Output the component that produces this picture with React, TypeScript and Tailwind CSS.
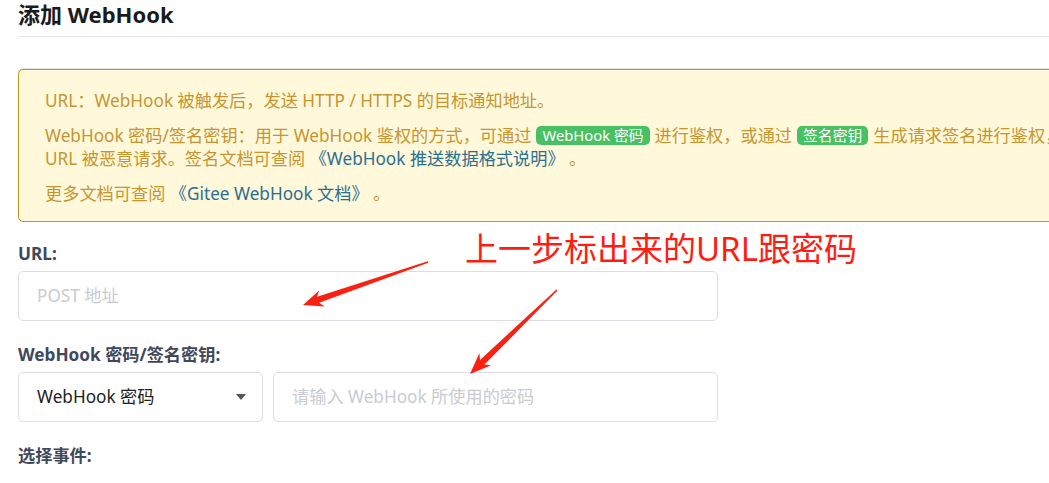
const FONT = { fontFamily: '"Noto Sans", "Noto Sans CJK SC", sans-serif' };

type Pt = [number, number];

// tapered annotation arrow, from a thin tail to a barbed tip
const arrowPoints = (tail: Pt, tip: Pt, headLen: number, shaftW: number, barbW: number) => {
  const dx = tip[0] - tail[0];
  const dy = tip[1] - tail[1];
  const len = Math.hypot(dx, dy);
  const ux = dx / len;
  const uy = dy / len;
  const nx = -uy;
  const ny = ux;
  const base: Pt = [tip[0] - ux * headLen, tip[1] - uy * headLen];
  const barb: Pt = [tip[0] - ux * headLen * 1.25, tip[1] - uy * headLen * 1.25];
  const pts: Pt[] = [
    [tail[0] + nx * 0.8, tail[1] + ny * 0.8],
    [base[0] + nx * shaftW, base[1] + ny * shaftW],
    [barb[0] + nx * barbW, barb[1] + ny * barbW],
    tip,
    [barb[0] - nx * barbW, barb[1] - ny * barbW],
    [base[0] - nx * shaftW, base[1] - ny * shaftW],
    [tail[0] - nx * 0.8, tail[1] - ny * 0.8],
  ];
  return pts.map((p) => p.join(",")).join(" ");
};

const Tag = ({ children }: { children: React.ReactNode }) => (
  <span className="inline-block mx-[5px] px-[6px] rounded-[5px] bg-[#47c163] text-white text-[14.8px] leading-[19px] align-[1px]">
    {children}
  </span>
);

const Label = ({ children }: { children: React.ReactNode }) => (
  <p className="text-[17.2px] leading-[24px] font-bold text-[#40485b] mb-[5px]">{children}</p>
);

const App = () => {
  return (
    <div className="relative h-screen w-screen overflow-hidden bg-white" style={FONT}>
      <section className="pl-[18px] w-[1170px]">
        <h1 className="text-[22px] leading-[28px] font-bold text-[#1b1b1b] pb-[8px] border-b border-[#e6e6e6]">
          添加 WebHook
        </h1>

        <div className="mt-[32px] border border-[#c79224] rounded-[5px] bg-[#fff8db] shadow-[0_-1px_0_#e4e4e4] pl-[26px] pr-4 pt-[19px] pb-[16px] text-[17.2px] leading-[23px] text-[#c6952f]">
          <p className="mb-[12px]">URL：WebHook 被触发后，发送 HTTP / HTTPS 的目标通知地址。</p>
          <p className="mb-[12px]">
            WebHook 密码/签名密钥：用于 WebHook 鉴权的方式，可通过<Tag>WebHook 密码</Tag>进行鉴权，或通过<Tag>签名密钥</Tag>生成请求签名进行鉴权，防止
            <br />
            URL 被恶意请求。签名文档可查阅 <span className="text-[#2a6f8f]">《WebHook 推送数据格式说明》</span> 。
          </p>
          <p>
            更多文档可查阅 <span className="text-[#2a6f8f]">《Gitee WebHook 文档》</span> 。
          </p>
        </div>

        <div className="w-[700px] mt-[20px]">
          <Label>URL:</Label>
          <div className="h-[50px] border border-[#dcdee3] rounded-[5px] flex items-center px-[18px] text-[17.2px] text-[#c9cbd0]">
            POST 地址
          </div>

          <div className="mt-[22px]">
            <Label>WebHook 密码/签名密钥:</Label>
            <div className="flex gap-[10px]">
              <div className="w-[245px] h-[50px] border border-[#dcdee3] rounded-[5px] flex items-center justify-between pl-[18px] pr-[16px] text-[17.2px] text-[#222]">
                <span>WebHook 密码</span>
                <svg width="10" height="6" viewBox="0 0 10 6">
                  <path d="M0 0 L10 0 L5 6 Z" fill="#555" />
                </svg>
              </div>
              <div className="flex-1 h-[50px] border border-[#dcdee3] rounded-[5px] flex items-center px-[18px] text-[17.2px] text-[#c9cbd0]">
                请输入 WebHook 所使用的密码
              </div>
            </div>
          </div>

          <div className="mt-[22px]">
            <Label>选择事件:</Label>
          </div>
        </div>
      </section>

      {/* screenshot annotation */}
      <p className="absolute left-[465px] top-[229px] text-[33px] leading-[40px] text-[#ff1d12] whitespace-nowrap">
        上一步标出来的URL跟密码
      </p>
      <svg className="absolute left-0 top-0 pointer-events-none" width="1049" height="483">
        <polygon points={arrowPoints([428, 262], [303, 305], 16, 3.2, 8.5)} fill="#fb2112" />
        <polygon points={arrowPoints([557, 290], [470, 374], 17, 3.2, 8.5)} fill="#fb2112" />
      </svg>
    </div>
  );
};

export default App;
